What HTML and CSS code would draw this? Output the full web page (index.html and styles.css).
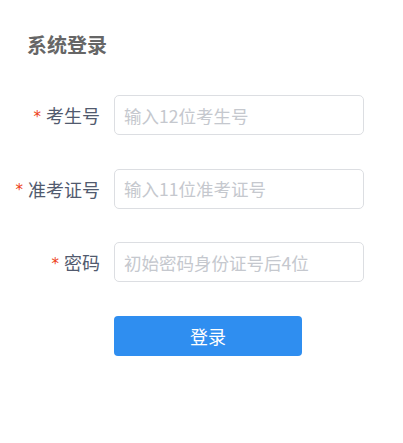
FILE: index.html
```html
<!DOCTYPE html>
<html lang="zh">
<head>
<meta charset="utf-8">
<title>系统登录</title>
<link rel="stylesheet" href="styles.css">
</head>
<body>
<div class="page">
  <h1 class="title">系统登录</h1>
  <form class="form">
    <div class="form-item">
      <label class="label"><span class="req">*</span>考生号</label>
      <input class="input" type="text" placeholder="输入12位考生号">
    </div>
    <div class="form-item">
      <label class="label"><span class="req">*</span>准考证号</label>
      <input class="input" type="text" placeholder="输入11位准考证号">
    </div>
    <div class="form-item">
      <label class="label"><span class="req">*</span>密码</label>
      <input class="input" type="password" placeholder="初始密码身份证号后4位">
    </div>
    <div class="form-item">
      <span></span>
      <button class="btn" type="button">登录</button>
    </div>
  </form>
</div>
</body>
</html>
```
FILE: styles.css
```css
* { box-sizing: border-box; }
body {
  margin: 0;
  background: #fff;
  font-family: "Noto Sans CJK SC", "Noto Sans", sans-serif;
}
.page {
  padding-top: 28px;
}
.title {
  margin: 0 0 0 27px;
  font-size: 20px;
  line-height: 34px;
  font-weight: 700;
  color: #666;
}
.form {
  margin-top: 33px;
  display: flex;
  flex-direction: column;
  gap: 33.5px;
}
.form-item {
  display: grid;
  grid-template-columns: 100px 250px;
  grid-template-rows: 40px;
  height: 40px;
  column-gap: 14px;
  align-items: center;
}
.label {
  display: flex;
  justify-content: flex-end;
  align-items: center;
  height: 40px;
  font-size: 18px;
  color: #515a6e;
  white-space: nowrap;
}
.req {
  color: #ed4014;
  font-size: 15px;
  line-height: 1;
  margin-right: 5px;
  font-family: "DejaVu Sans", sans-serif;
  position: relative;
  top: 2px;
}
.input {
  height: 40px;
  width: 250px;
  border: 1px solid #dcdee2;
  border-radius: 5px;
  padding: 0 9px;
  font-size: 17.5px;
  font-family: inherit;
  color: #515a6e;
  outline: none;
}
.input::placeholder {
  color: #c5c8ce;
}
.btn {
  width: 188px;
  height: 40px;
  border: none;
  border-radius: 4px;
  background: #2f8ef0;
  color: #fff;
  font-size: 18px;
  font-family: inherit;
}
```
